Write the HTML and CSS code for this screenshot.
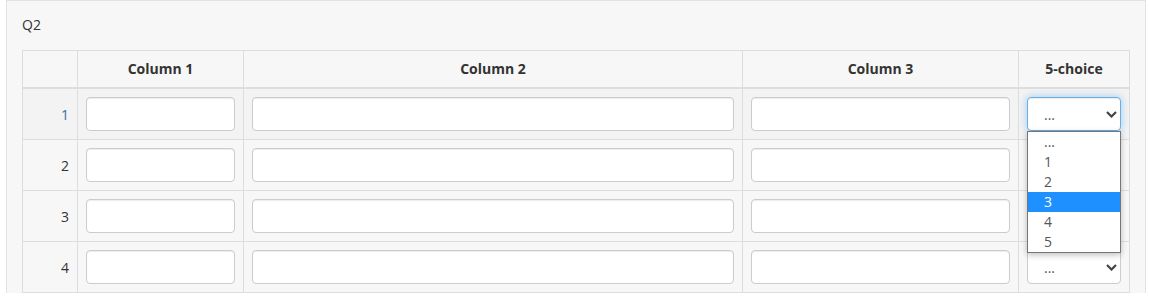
FILE: index.html
```html
<!DOCTYPE html>
<html lang="en">
<head>
    <meta charset="UTF-8">
    <title>Q2</title>
    <link rel="stylesheet" href="styles.css">
</head>
<body>
    <div class="page">
        <div class="panel">
            <div class="title">Q2</div>
            <table class="grid">
                <colgroup>
                    <col class="col-num">
                    <col class="col-1">
                    <col class="col-2">
                    <col class="col-3">
                    <col class="col-choice">
                </colgroup>
                <thead>
                    <tr>
                        <th></th>
                        <th>Column 1</th>
                        <th>Column 2</th>
                        <th>Column 3</th>
                        <th>5-choice</th>
                    </tr>
                </thead>
                <tbody>
                    <tr class="active">
                        <td class="num num-link">1</td>
                        <td><input class="field" type="text"></td>
                        <td><input class="field" type="text"></td>
                        <td><input class="field" type="text"></td>
                        <td>
                            <div class="choice open">
                                <select class="field pick focus">
                                    <option>...</option>
                                    <option>1</option>
                                    <option>2</option>
                                    <option>3</option>
                                    <option>4</option>
                                    <option>5</option>
                                </select>
                                <svg class="chev" width="11" height="7" viewBox="0 0 11 7"><path d="M1 1 L5.5 5.5 L10 1" fill="none" stroke="#444" stroke-width="2.2"/></svg>
                                <ul class="menu">
                                    <li>...</li>
                                    <li>1</li>
                                    <li>2</li>
                                    <li class="hl">3</li>
                                    <li>4</li>
                                    <li>5</li>
                                </ul>
                            </div>
                        </td>
                    </tr>
                    <tr>
                        <td class="num">2</td>
                        <td><input class="field" type="text"></td>
                        <td><input class="field" type="text"></td>
                        <td><input class="field" type="text"></td>
                        <td>
                            <div class="choice">
                                <select class="field pick"><option>...</option></select>
                                <svg class="chev" width="11" height="7" viewBox="0 0 11 7"><path d="M1 1 L5.5 5.5 L10 1" fill="none" stroke="#444" stroke-width="2.2"/></svg>
                            </div>
                        </td>
                    </tr>
                    <tr>
                        <td class="num">3</td>
                        <td><input class="field" type="text"></td>
                        <td><input class="field" type="text"></td>
                        <td><input class="field" type="text"></td>
                        <td>
                            <div class="choice">
                                <select class="field pick"><option>...</option></select>
                                <svg class="chev" width="11" height="7" viewBox="0 0 11 7"><path d="M1 1 L5.5 5.5 L10 1" fill="none" stroke="#444" stroke-width="2.2"/></svg>
                            </div>
                        </td>
                    </tr>
                    <tr>
                        <td class="num">4</td>
                        <td><input class="field" type="text"></td>
                        <td><input class="field" type="text"></td>
                        <td><input class="field" type="text"></td>
                        <td>
                            <div class="choice">
                                <select class="field pick"><option>...</option></select>
                                <svg class="chev" width="11" height="7" viewBox="0 0 11 7"><path d="M1 1 L5.5 5.5 L10 1" fill="none" stroke="#444" stroke-width="2.2"/></svg>
                            </div>
                        </td>
                    </tr>
                </tbody>
            </table>
        </div>
    </div>
</body>
</html>
```
FILE: styles.css
```css
body {
    margin: 0;
    background-color: #fff;
    font-family: "Open Sans", "DejaVu Sans", sans-serif;
    font-size: 14px;
    color: #333;
}
.page {
    padding: 0 3px 0 6px;
}
.panel {
    width: 1140px;
    box-sizing: border-box;
    padding: 0 15px;
    border: 1px solid #e3e3e3;
    border-bottom: none;
    background-color: #f7f7f7;
}
.title {
    padding: 14px 0 15px;
    line-height: 20px;
}
.grid {
    width: 1108px;
    table-layout: fixed;
    border-collapse: collapse;
    border: 1px solid #ddd;
    border-bottom-color: #e3e3e3;
}
.col-num { width: 55px; }
.col-1 { width: 166px; }
.col-2 { width: 499px; }
.col-3 { width: 276px; }
.col-choice { width: 111px; }
.grid th {
    padding: 8px;
    line-height: 20px;
    font-weight: bold;
    text-align: center;
    border: 1px solid #ddd;
    border-bottom: 2px solid #ddd;
}
.grid td {
    padding: 8px;
    border: 1px solid #ddd;
    vertical-align: middle;
}
.grid tr.active td {
    background-color: #f3f3f3;
}
.num {
    text-align: right;
    color: #333;
}
.num-link {
    color: #2f6fa6;
}
.field {
    display: block;
    width: 100%;
    height: 34px;
    box-sizing: border-box;
    margin: 0;
    padding: 6px 12px;
    border: 1px solid #ccc;
    border-radius: 4px;
    background-color: #fff;
    box-shadow: inset 0 1px 1px rgba(0, 0, 0, .075);
    font-family: inherit;
    font-size: 14px;
    color: #555;
}
.choice {
    position: relative;
}
.pick {
    appearance: none;
    -webkit-appearance: none;
    padding-left: 16px;
}
.pick.focus {
    border-color: #66afe9;
    box-shadow: inset 0 1px 1px rgba(0, 0, 0, .075), 0 0 8px rgba(102, 175, 233, .6);
    outline: none;
}
.chev {
    position: absolute;
    right: 4px;
    top: 14px;
    pointer-events: none;
}
.menu {
    position: absolute;
    left: 0;
    right: 0;
    top: 100%;
    z-index: 5;
    margin: 0;
    padding: 0;
    list-style: none;
    background-color: #fff;
    border: 1px solid #767676;
    box-shadow: 0 2px 6px rgba(0, 0, 0, .25);
}
.menu li {
    height: 20px;
    line-height: 20px;
    padding-left: 16px;
    color: #555;
}
.menu li.hl {
    background-color: #1e90ff;
    color: #fff;
}
```
